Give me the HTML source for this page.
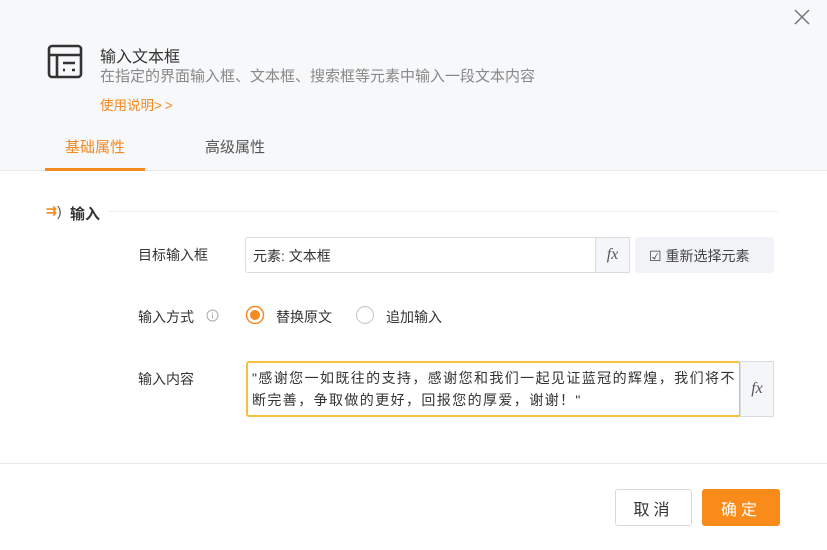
<!DOCTYPE html>
<html><head><meta charset="utf-8"><style>
*{box-sizing:border-box;margin:0;padding:0}
body{width:827px;height:550px;overflow:hidden;background:#fff;font-family:"Liberation Sans","Noto Sans CJK SC",sans-serif;color:#333;position:relative}
.hdr{position:absolute;left:0;top:0;width:827px;height:171px;background:#f7f8fa;border-bottom:1px solid #e8eaee}
.abs{position:absolute;white-space:nowrap}
.close{position:absolute;left:793px;top:8px}
.tab1{left:65px;top:136px;font-size:15px;color:#f48a20}
.tab2{left:205px;top:136px;font-size:15px;color:#555}
.uline{position:absolute;left:45px;top:168px;width:100px;height:3px;background:#f48a20}
.field{position:absolute;border:1px solid #d8dce3;border-radius:3px;background:#fff}
.fx{position:absolute;font-family:"Liberation Serif",serif;font-style:italic;font-size:16px;color:#555;background:#f5f6f8;border:1px solid #d8dce3;display:flex;align-items:center;justify-content:center}
</style></head><body>
<div class="hdr"></div>
<svg class="close" width="18" height="18" viewBox="0 0 18 18"><path d="M2 2L16 16M16 2L2 16" stroke="#777" stroke-width="1.5"/></svg>
<svg class="abs" style="left:47px;top:44px" width="36" height="36" viewBox="0 0 36 36" fill="none" stroke="#333" stroke-width="2.6"><rect x="2" y="2" width="32" height="31" rx="3"/><path d="M2 11H34M10 11V33M16 19H28M25 26H28" /><path d="M16 26h2" /></svg>
<div class="abs" style="left:100px;top:43px;font-size:16px;color:#333">输入文本框</div>
<div class="abs" style="left:100px;top:65px;font-size:15px;color:#888">在指定的界面输入框、文本框、搜索框等元素中输入一段文本内容</div>
<div class="abs" style="left:100px;top:94px;font-size:13.5px;color:#f48a20">使用说明<span style="letter-spacing:3px">&gt;&gt;</span></div>
<div class="abs tab1">基础属性</div>
<div class="abs tab2">高级属性</div>
<div class="uline"></div>

<div class="abs" style="left:46px;top:203px;font-size:13px;color:#f48a20;font-weight:bold">⇉</div>
<div class="abs" style="left:57px;top:203px;font-size:14px;color:#555">)</div>
<div class="abs" style="left:70px;top:203px;font-size:15px;color:#333;font-weight:bold">输入</div>
<div class="abs" style="left:108px;top:211px;width:670px;height:1px;background:#eceef1"></div>

<div class="abs" style="left:138px;top:245px;font-size:14px;color:#333">目标输入框</div>
<div class="field" style="left:245px;top:237px;width:352px;height:36px"></div>
<div class="abs" style="left:253px;top:246px;font-size:14px;color:#333">元素: 文本框</div>
<div class="fx" style="left:595px;top:237px;width:35px;height:36px">fx</div>
<div class="abs" style="left:635px;top:237px;width:139px;height:36px;background:#f1f3f6;border-radius:4px"></div>
<div class="abs" style="left:649px;top:246px;font-size:14px;color:#444">☑ 重新选择元素</div>

<div class="abs" style="left:138px;top:307px;font-size:14px;color:#333">输入方式</div>
<svg class="abs" style="left:206px;top:309px" width="13" height="13" viewBox="0 0 13 13"><circle cx="6.5" cy="6.5" r="5.5" fill="none" stroke="#aaa"/><path d="M6.5 5.5v4M6.5 3.5v1" stroke="#aaa"/></svg>
<svg class="abs" style="left:245px;top:305px" width="20" height="20"><circle cx="10" cy="10" r="8.5" fill="#fff" stroke="#f48a20" stroke-width="1.5"/><circle cx="10" cy="10" r="5" fill="#f48a20"/></svg>
<div class="abs" style="left:276px;top:307px;font-size:14px;color:#333">替换原文</div>
<svg class="abs" style="left:355px;top:305px" width="20" height="20"><circle cx="10" cy="10" r="8.5" fill="#fff" stroke="#ccc" stroke-width="1.2"/></svg>
<div class="abs" style="left:386px;top:307px;font-size:14px;color:#333">追加输入</div>

<div class="abs" style="left:138px;top:369px;font-size:14px;color:#333">输入内容</div>
<div class="abs" style="left:246px;top:361px;width:495px;height:56px;border:2px solid #f5c13b;border-radius:3px;background:#fff"></div>
<div class="abs" style="left:252px;top:367px;font-size:14px;line-height:22px;color:#333;letter-spacing:1.4px">"感谢您一如既往的支持，感谢您和我们一起见证蓝冠的辉煌，我们将不<br>断完善，争取做的更好，回报您的厚爱，谢谢！"</div>
<div class="fx" style="left:740px;top:361px;width:34px;height:56px">fx</div>

<div class="abs" style="left:0;top:463px;width:827px;height:1px;background:#e8eaee"></div>
<div class="abs" style="left:615px;top:489px;width:77px;height:37px;border:1px solid #d6dae0;border-radius:3px;background:#fff;font-size:16px;color:#333;display:flex;align-items:center;justify-content:center;letter-spacing:4px">取消</div>
<div class="abs" style="left:702px;top:489px;width:78px;height:37px;border-radius:3px;background:#f88b1a;font-size:16px;color:#fff;display:flex;align-items:center;justify-content:center;letter-spacing:4px">确定</div>
</body></html>
